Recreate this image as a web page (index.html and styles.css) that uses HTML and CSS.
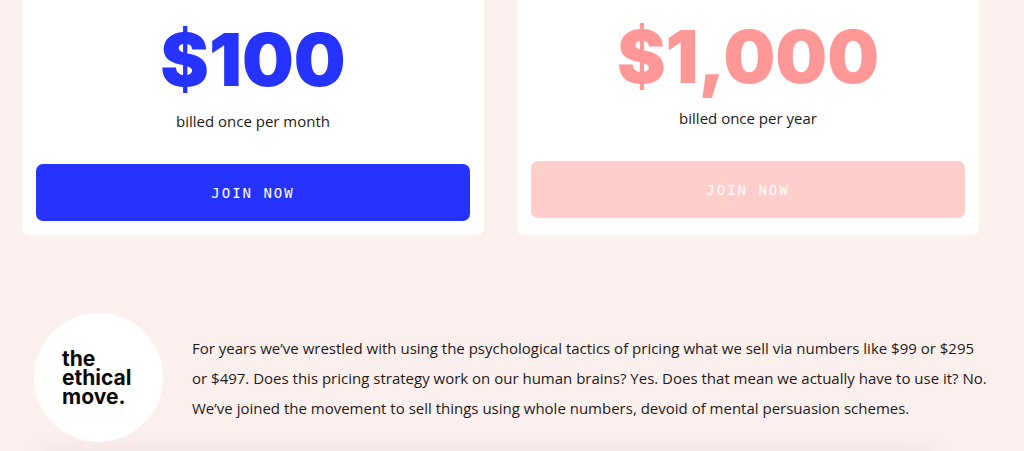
FILE: index.html
```html
<!DOCTYPE html>
<html lang="en">
<head>
<meta charset="utf-8">
<meta name="viewport" content="width=device-width, initial-scale=1">
<title>Pricing</title>
<link rel="stylesheet" href="styles.css">
</head>
<body>
<main class="page">
  <section class="plans">
    <article class="plan plan-monthly">
      <h2 class="price">$100</h2>
      <p class="billing">billed once per month</p>
      <button class="join" type="button">JOIN NOW</button>
    </article>
    <article class="plan plan-yearly">
      <h2 class="price">$1,000</h2>
      <p class="billing">billed once per year</p>
      <button class="join" type="button">JOIN NOW</button>
    </article>
  </section>
  <section class="ethics">
    <div class="badge">
      <p class="badge-text">the<br>ethical<br>move.</p>
    </div>
    <p class="statement">For years we’ve wrestled with using the psychological tactics of pricing what we sell via numbers like $99 or $295 or $497. Does this pricing strategy work on our human brains? Yes. Does that mean we actually have to use it? No. We’ve joined the movement to sell things using whole numbers, devoid of mental persuasion schemes.</p>
  </section>
  <div class="panel-edge"></div>
</main>
</body>
</html>
```
FILE: styles.css
```css
* {
  box-sizing: border-box;
}

body {
  margin: 0;
  background: #fcf0ee;
  color: #1c1a1a;
  font-family: "Open Sans", sans-serif;
}

.page {
  overflow: hidden;
}

.plans {
  display: grid;
  grid-template-columns: 1fr 1fr;
  gap: 33px;
  padding: 0 45px 0 22px;
}

.plan {
  display: flex;
  flex-direction: column;
  padding: 20px 14px 14px;
  border-radius: 0 0 7px 7px;
  background: #fff;
  text-align: center;
}

.plan-yearly {
  padding-top: 17px;
  padding-bottom: 17px;
}

.price {
  margin: 0;
  font-family: Inter, sans-serif;
  font-size: 73px;
  line-height: 80px;
  font-weight: 900;
}

.plan-monthly .price {
  color: #2633ff;
}

.plan-yearly .price {
  color: #ff9796;
}

.billing {
  margin: 8px 0 30px;
  font-size: 15px;
  line-height: 26px;
}

.join {
  height: 57px;
  border: 0;
  border-radius: 7px;
  color: #fff;
  font-family: "DejaVu Sans Mono", monospace;
  font-size: 14px;
  letter-spacing: 2px;
  cursor: pointer;
}

.plan-monthly .join {
  background: #2633ff;
}

.plan-yearly .join {
  background: #ffcdca;
}

.ethics {
  display: flex;
  align-items: center;
  gap: 29px;
  padding: 78px 36px 9px 34px;
}

.badge {
  display: flex;
  flex: none;
  align-items: center;
  width: 129px;
  height: 129px;
  padding-left: 28px;
  border-radius: 50%;
  background: #fff;
}

.badge-text {
  margin: 0;
  color: #0a0a0a;
  font-family: Inter, sans-serif;
  font-size: 21px;
  line-height: 19px;
  font-weight: 700;
}

.statement {
  margin: 0;
  font-size: 15px;
  line-height: 30px;
}

.panel-edge {
  height: 1px;
  margin: 0 104px -1px 56px;
  box-shadow: 0 20px 30px 14px rgba(90, 30, 50, 0.12);
}
```
